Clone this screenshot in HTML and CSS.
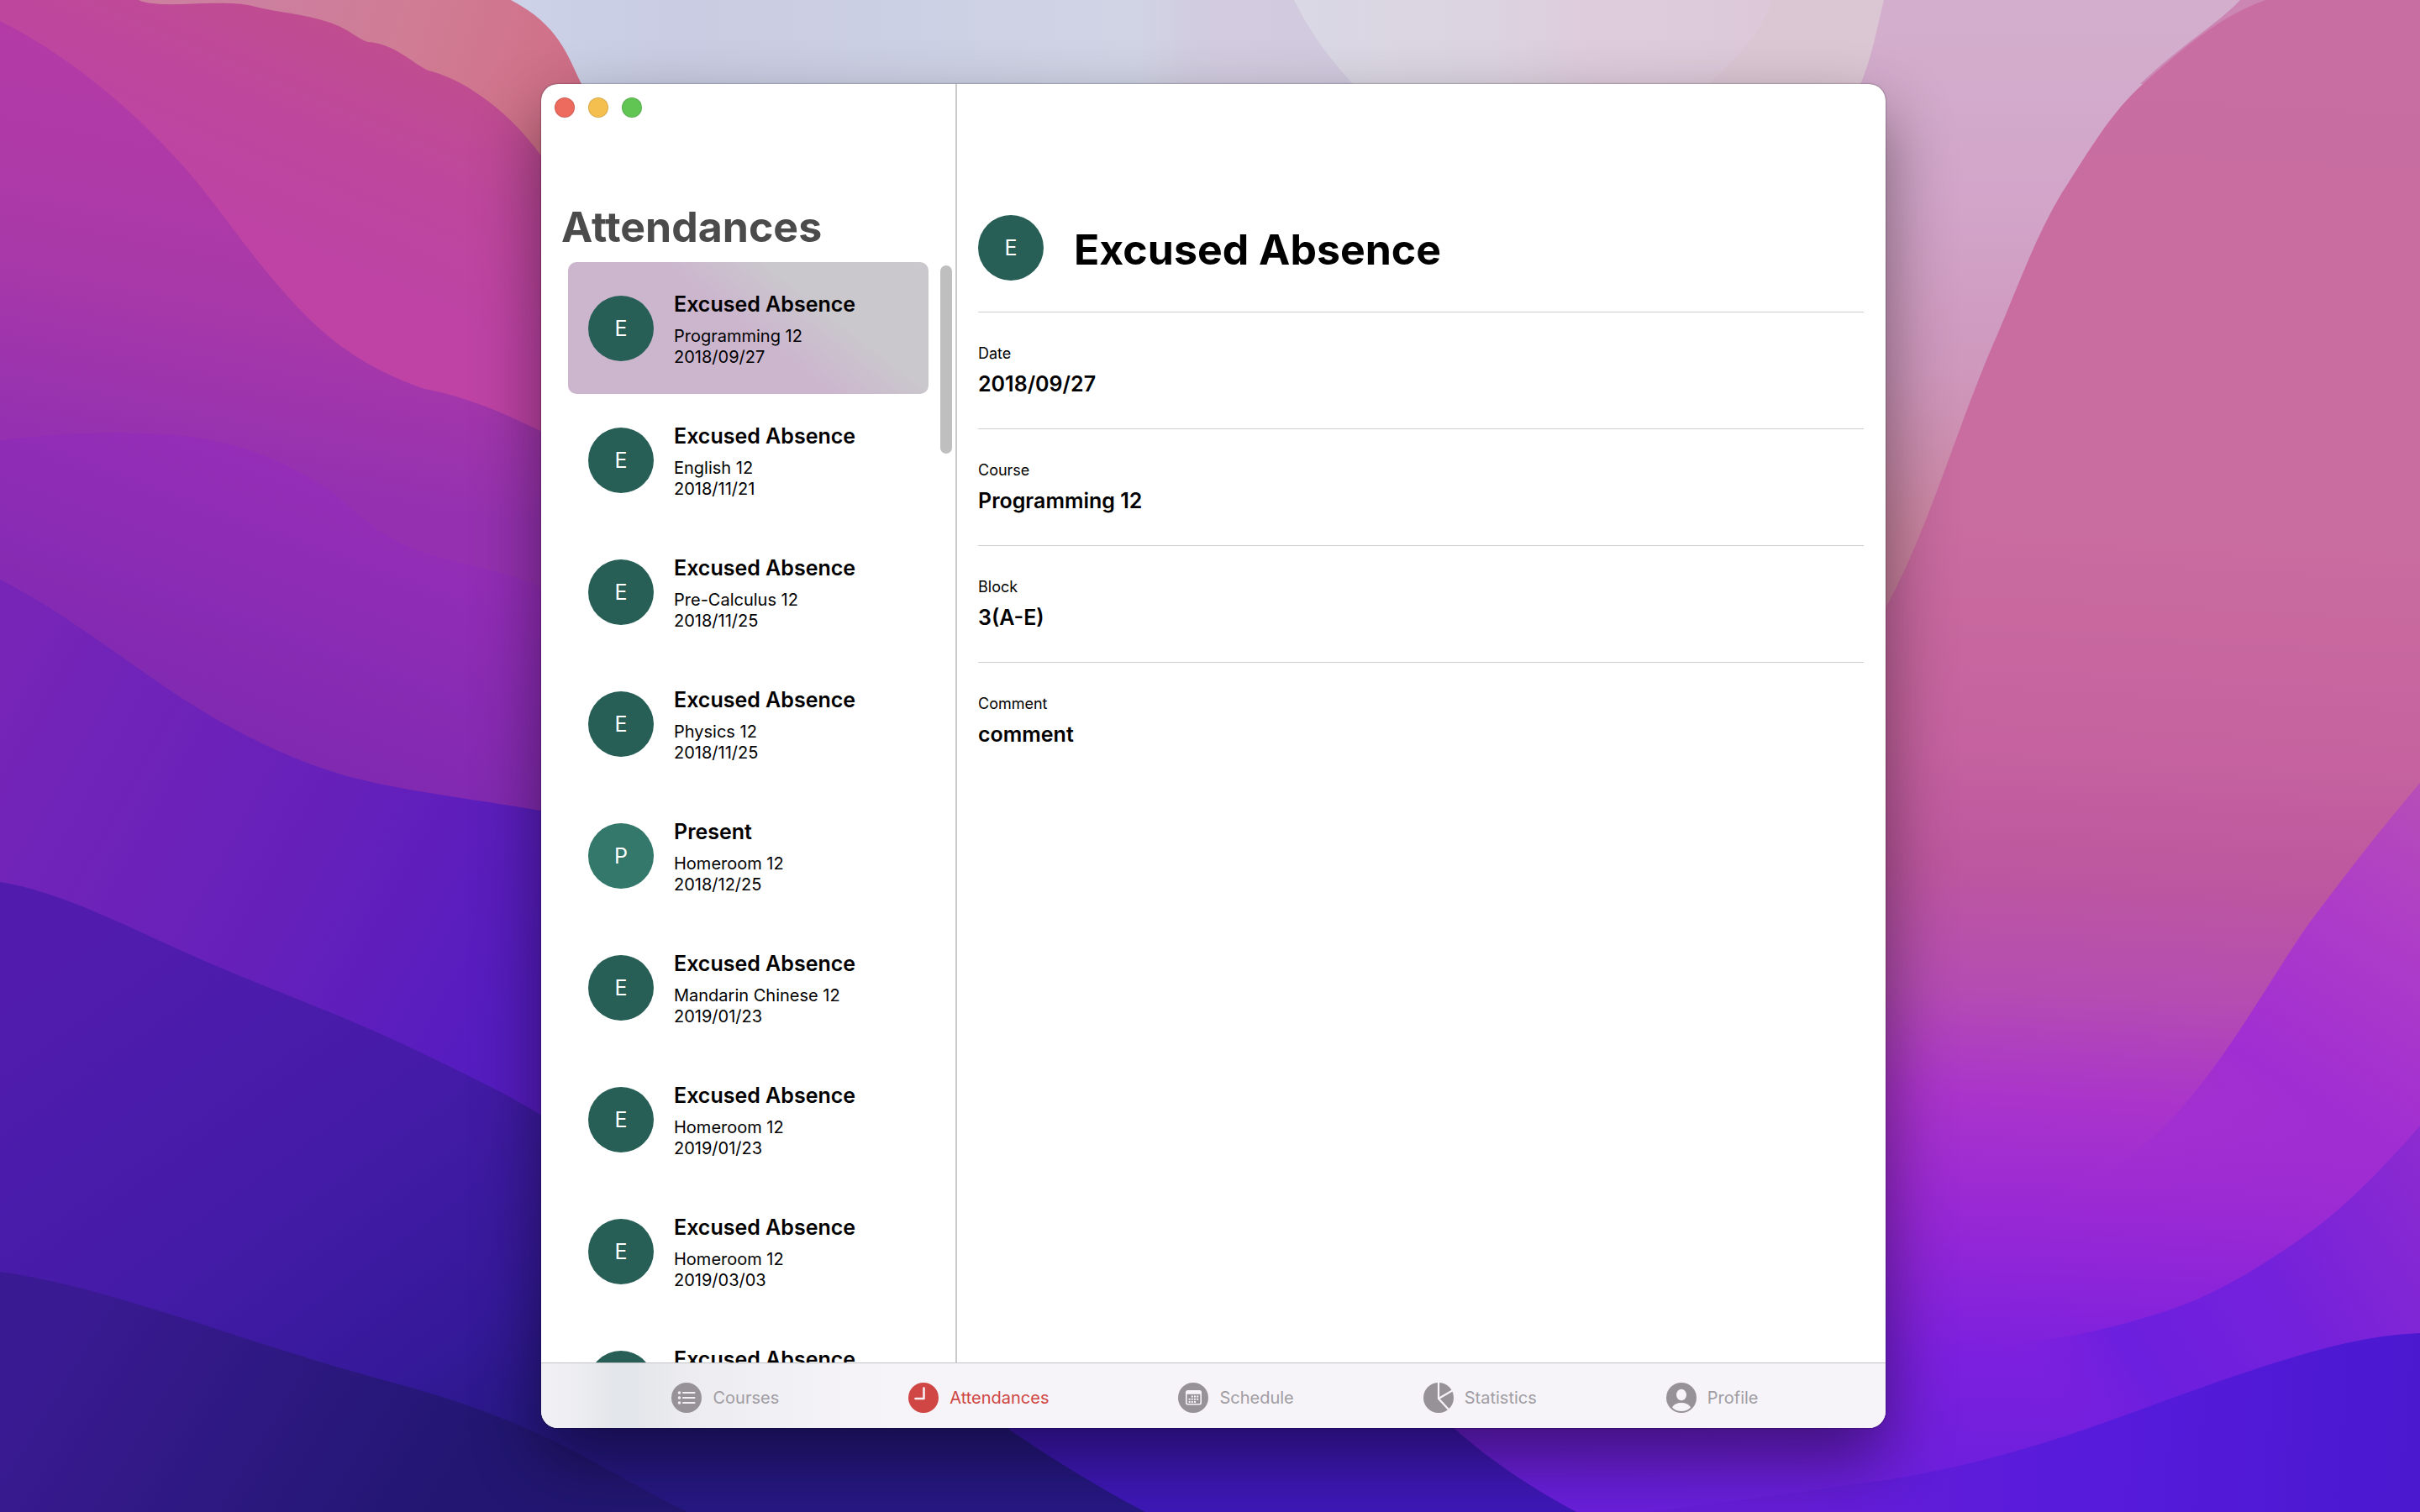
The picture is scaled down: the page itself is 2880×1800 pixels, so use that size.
FILE: index.html
```html
<!DOCTYPE html>
<html lang="en">
<head>
<meta charset="utf-8">
<title>Attendances</title>
<meta name="viewport" content="width=device-width, initial-scale=1">
<link rel="stylesheet" href="styles.css">
</head>
<body>
<svg class="wallpaper" viewBox="0 0 2880 1800" preserveAspectRatio="none" aria-hidden="true">
  <defs>
    <linearGradient id="sky" gradientUnits="userSpaceOnUse" x1="600" y1="0" x2="2240" y2="0">
      <stop offset="0" stop-color="#cdd2e8"/><stop offset=".12" stop-color="#c9cce2"/><stop offset=".46" stop-color="#d0d4e5"/><stop offset=".5" stop-color="#d2cce0"/><stop offset="1" stop-color="#d0c4da"/>
    </linearGradient>
    <linearGradient id="mist" gradientUnits="userSpaceOnUse" x1="1550" y1="0" x2="2110" y2="0">
      <stop offset="0" stop-color="#dad8e5"/><stop offset=".4" stop-color="#dcd4e0"/><stop offset=".6" stop-color="#deccdc"/><stop offset="1" stop-color="#dcc8d8"/>
    </linearGradient>
    <linearGradient id="lilac" x1="0" y1="0" x2="0" y2="1">
      <stop offset="0" stop-color="#d3afcd"/><stop offset=".3" stop-color="#d2a5c9"/><stop offset=".55" stop-color="#cf98bd"/><stop offset=".8" stop-color="#cb84a0"/><stop offset="1" stop-color="#c67a98"/>
    </linearGradient>
    <linearGradient id="rose" gradientUnits="userSpaceOnUse" x1="2600" y1="0" x2="2500" y2="1800">
      <stop offset="0" stop-color="#c96ea2"/><stop offset=".35" stop-color="#c96c9f"/><stop offset=".5" stop-color="#c5629f"/><stop offset=".58" stop-color="#bd579f"/><stop offset=".66" stop-color="#b44cb2"/><stop offset=".73" stop-color="#aa34cb"/><stop offset=".8" stop-color="#9a29d4"/><stop offset=".9" stop-color="#7c20de"/><stop offset="1" stop-color="#6a1fdc"/>
    </linearGradient>
    <linearGradient id="orchid" gradientUnits="userSpaceOnUse" x1="2880" y1="920" x2="2560" y2="1440">
      <stop offset="0" stop-color="#b74fb6"/><stop offset=".3" stop-color="#ae3cc8"/><stop offset=".65" stop-color="#a02dd2"/><stop offset="1" stop-color="#9629d6" stop-opacity="0"/>
    </linearGradient>
    <linearGradient id="violet" gradientUnits="userSpaceOnUse" x1="2880" y1="1340" x2="2420" y2="1640">
      <stop offset="0" stop-color="#8d2bcf"/><stop offset=".45" stop-color="#7421db"/><stop offset=".8" stop-color="#6c1fde"/><stop offset="1" stop-color="#741fde" stop-opacity="0"/>
    </linearGradient>
    <linearGradient id="indigo" gradientUnits="userSpaceOnUse" x1="2150" y1="1740" x2="2860" y2="1800">
      <stop offset="0" stop-color="#661dd8"/><stop offset=".5" stop-color="#561bdb"/><stop offset="1" stop-color="#4b18d0"/>
    </linearGradient>
    <linearGradient id="peach" gradientUnits="userSpaceOnUse" x1="300" y1="0" x2="690" y2="120">
      <stop offset="0" stop-color="#cc7f9f"/><stop offset=".5" stop-color="#d07c94"/><stop offset="1" stop-color="#cf6e86"/>
    </linearGradient>
    <linearGradient id="magenta" gradientUnits="userSpaceOnUse" x1="560" y1="60" x2="440" y2="340">
      <stop offset="0" stop-color="#c04f8c"/><stop offset=".5" stop-color="#be479c"/><stop offset="1" stop-color="#be43a5"/>
    </linearGradient>
    <linearGradient id="plum" gradientUnits="userSpaceOnUse" x1="300" y1="50" x2="200" y2="540">
      <stop offset="0" stop-color="#b53ba6"/><stop offset=".6" stop-color="#a939a8"/><stop offset="1" stop-color="#9531b0"/>
    </linearGradient>
    <linearGradient id="grape" gradientUnits="userSpaceOnUse" x1="380" y1="520" x2="240" y2="900">
      <stop offset="0" stop-color="#982eb8"/><stop offset="1" stop-color="#7e29b0"/>
    </linearGradient>
    <linearGradient id="iris" gradientUnits="userSpaceOnUse" x1="0" y1="800" x2="640" y2="1150">
      <stop offset="0" stop-color="#7625b7"/><stop offset=".6" stop-color="#6520ba"/><stop offset="1" stop-color="#551cc0"/>
    </linearGradient>
    <linearGradient id="royal" gradientUnits="userSpaceOnUse" x1="160" y1="1080" x2="620" y2="1720">
      <stop offset="0" stop-color="#511cae"/><stop offset=".5" stop-color="#431ba6"/><stop offset=".8" stop-color="#35199a"/><stop offset="1" stop-color="#261883"/>
    </linearGradient>
    <linearGradient id="navy" gradientUnits="userSpaceOnUse" x1="100" y1="1540" x2="520" y2="1800">
      <stop offset="0" stop-color="#3a1a92"/><stop offset=".6" stop-color="#2b187e"/><stop offset="1" stop-color="#221672"/>
    </linearGradient>
  </defs>
  <rect width="2880" height="1800" fill="url(#sky)"/>
  <path fill="url(#mist)" d="M1540 0C1560 40 1585 75 1620 110L1700 200H2300V0Z"/>
  <path fill="#dbc5d2" opacity=".8" d="M2110 0C2095 40 2065 75 2020 110V200H2300V0Z"/>
  <path fill="url(#lilac)" d="M2242 0C2232 40 2228 70 2210 110L2180 800H2700V0Z"/>
  <path fill="#cb86b4" d="M2666 0C2640 28 2600 50 2547 100L2600 100 2700 0Z"/>
  <path fill="url(#rose)" d="M2696 0C2640 20 2595 60 2547 103C2512 135 2487 178 2460 220C2427 270 2404 335 2378 396C2345 470 2316 560 2287 631C2265 685 2240 740 2200 790L1400 1500V1800H2880V0Z"/>
  <path fill="url(#orchid)" d="M2880 932C2835 985 2800 1030 2751 1095C2715 1145 2670 1225 2629 1278C2590 1330 2560 1362 2500 1400L2500 1800H2880Z"/>
  <path fill="url(#violet)" d="M2880 1340C2835 1392 2790 1438 2742 1472C2680 1515 2630 1545 2568 1564C2510 1582 2465 1592 2400 1600V1800H2880Z"/>
  <path fill="url(#indigo)" d="M2880 1587C2810 1590 2755 1608 2699 1625C2620 1650 2540 1682 2460 1709C2370 1738 2290 1757 2200 1768C2130 1778 2060 1788 1960 1800H2880Z"/>
  <path fill="#3f18b8" d="M1700 1670L1730 1700C1775 1740 1825 1773 1876 1800H1000V1500Z"/>
  <path fill="#261883" d="M1100 1640L1198 1700C1250 1735 1305 1770 1363 1800H600V1500Z"/>
  <path fill="url(#peach)" d="M0 0H608C665 30 675 65 691 98L760 240H0Z"/>
  <path fill="url(#magenta)" d="M0 0H165C190 12 260 -2 300 7C330 15 360 16 390 26C415 34 425 46 438 50C470 52 490 75 510 84C545 92 600 125 643 184L760 300V560H0Z"/>
  <path fill="url(#plum)" d="M0 25C70 60 150 120 220 200C255 240 285 285 321 328C365 380 410 430 505 463C555 472 600 492 643 513L760 560V760H0Z"/>
  <path fill="url(#grape)" d="M0 524C90 513 190 512 252 524C300 533 350 555 390 582C420 604 440 630 482 649C535 672 590 675 643 698L760 740V1000H0Z"/>
  <path fill="url(#iris)" d="M0 690C70 725 140 780 207 825C260 860 330 900 413 924C480 942 570 952 643 965L760 1000V1400H0Z"/>
  <path fill="url(#royal)" d="M0 1050C75 1062 155 1105 230 1138C320 1178 400 1205 482 1244C540 1272 600 1300 643 1327L760 1400V1800H0Z"/>
  <path fill="url(#navy)" d="M0 1514C75 1524 155 1550 230 1573C310 1600 400 1628 482 1650C570 1675 640 1702 720 1748C755 1766 785 1785 819 1800H0Z"/>
</svg>

<div class="desktop">
  <main class="window">
    <div class="panes">
      <section class="sidebar" aria-label="Attendance list">
        <div class="controls">
          <button class="control control-close" type="button" aria-label="Close"></button>
          <button class="control control-minimize" type="button" aria-label="Minimize"></button>
          <button class="control control-zoom" type="button" aria-label="Zoom"></button>
        </div>
        <h1 class="sidebar-title">Attendances</h1>
        <div class="list-area">
          <div class="list">
            <button class="row row-selected" type="button"><span class="avatar">E</span><span class="row-text"><span class="row-title">Excused Absence</span><span class="row-meta">Programming 12</span><span class="row-meta">2018/09/27</span></span></button>
            <button class="row" type="button"><span class="avatar">E</span><span class="row-text"><span class="row-title">Excused Absence</span><span class="row-meta">English 12</span><span class="row-meta">2018/11/21</span></span></button>
            <button class="row" type="button"><span class="avatar">E</span><span class="row-text"><span class="row-title">Excused Absence</span><span class="row-meta">Pre-Calculus 12</span><span class="row-meta">2018/11/25</span></span></button>
            <button class="row" type="button"><span class="avatar">E</span><span class="row-text"><span class="row-title">Excused Absence</span><span class="row-meta">Physics 12</span><span class="row-meta">2018/11/25</span></span></button>
            <button class="row" type="button"><span class="avatar avatar-present">P</span><span class="row-text"><span class="row-title">Present</span><span class="row-meta">Homeroom 12</span><span class="row-meta">2018/12/25</span></span></button>
            <button class="row" type="button"><span class="avatar">E</span><span class="row-text"><span class="row-title">Excused Absence</span><span class="row-meta">Mandarin Chinese 12</span><span class="row-meta">2019/01/23</span></span></button>
            <button class="row" type="button"><span class="avatar">E</span><span class="row-text"><span class="row-title">Excused Absence</span><span class="row-meta">Homeroom 12</span><span class="row-meta">2019/01/23</span></span></button>
            <button class="row" type="button"><span class="avatar">E</span><span class="row-text"><span class="row-title">Excused Absence</span><span class="row-meta">Homeroom 12</span><span class="row-meta">2019/03/03</span></span></button>
            <button class="row" type="button"><span class="avatar">E</span><span class="row-text"><span class="row-title">Excused Absence</span></span></button>
          </div>
          <span class="scroll-thumb"></span>
        </div>
      </section>

      <section class="detail" aria-label="Attendance detail">
        <header class="detail-header">
          <span class="avatar">E</span>
          <h2 class="detail-title">Excused Absence</h2>
        </header>
        <dl class="fields">
          <div class="field"><dt>Date</dt><dd>2018/09/27</dd></div>
          <div class="field"><dt>Course</dt><dd>Programming 12</dd></div>
          <div class="field"><dt>Block</dt><dd>3(A-E)</dd></div>
          <div class="field"><dt>Comment</dt><dd>comment</dd></div>
        </dl>
      </section>
    </div>

    <nav class="tabs" aria-label="Sections">
      <a class="tab" href="#courses">
        <svg class="tab-icon" viewBox="0 0 36 36" aria-hidden="true"><circle cx="18" cy="18" r="18" fill="currentColor"/><g fill="#f1f0f5"><circle cx="9.5" cy="12" r="1.8"/><circle cx="9.5" cy="18" r="1.8"/><circle cx="9.5" cy="24" r="1.8"/></g><path d="M14 12H27.500M14 18H27.500M14 24H27.500" stroke="#f1f0f5" stroke-width="2" stroke-linecap="round"/></svg>
        <span>Courses</span>
      </a>
      <a class="tab tab-active" href="#attendances" aria-current="page">
        <svg class="tab-icon" viewBox="0 0 36 36" aria-hidden="true"><circle cx="18" cy="18" r="18" fill="currentColor"/><path d="M18.500 6.500V19H8.500" fill="none" stroke="#f6eef2" stroke-width="2.600" stroke-linecap="round" stroke-linejoin="round"/></svg>
        <span>Attendances</span>
      </a>
      <a class="tab" href="#schedule">
        <svg class="tab-icon" viewBox="0 0 36 36" aria-hidden="true"><circle cx="18" cy="18" r="18" fill="currentColor"/><path fill="#f6f4f9" fill-rule="evenodd" d="M11.500 9H25.500Q28 9 28 11.500V24Q28 26.500 25.500 26.500H11.500Q9 26.500 9 24V11.500Q9 9 11.500 9ZM10.600 13.800V23.800Q10.600 25 11.800 25H25.200Q26.400 25 26.400 23.800V13.800Z"/><path fill="none" stroke="#f6f4f9" stroke-width="2" stroke-dasharray="2 1.200" d="M15.800 16.500H25M12.600 19.700H25M12.600 22.900H22"/></svg>
        <span>Schedule</span>
      </a>
      <a class="tab" href="#statistics">
        <svg class="tab-icon" viewBox="0 0 36 36" aria-hidden="true"><circle cx="18" cy="18" r="18" fill="currentColor"/><path d="M18 -1V19L30 32M18 19L36 8.500" fill="none" stroke="#f6f4f9" stroke-width="2.200"/></svg>
        <span>Statistics</span>
      </a>
      <a class="tab" href="#profile">
        <svg class="tab-icon" viewBox="0 0 36 36" aria-hidden="true"><circle cx="18" cy="18" r="18" fill="currentColor"/><ellipse cx="18" cy="14.500" rx="6" ry="6.800" fill="#f6f4f9"/><path d="M7 29.500Q10 24 18 24T29 29.500Q24.500 34 18 34T7 29.500Z" fill="#f6f4f9"/></svg>
        <span>Profile</span>
      </a>
    </nav>
  </main>
</div>
</body>
</html>
```
FILE: styles.css
```css
* {
  box-sizing: border-box;
}

body {
  margin: 0;
  font-family: Inter, "Liberation Sans", sans-serif;
  color: #000;
}

button {
  margin: 0;
  padding: 0;
  border: 0;
  background: none;
  font: inherit;
  color: inherit;
  text-align: left;
}

.wallpaper {
  position: absolute;
  inset: 0;
  width: 100%;
  height: 100%;
}

.desktop {
  position: relative;
  display: grid;
  grid-template-columns: 161fr 400fr 159fr;
  grid-template-rows: 1fr 16fr 1fr;
  height: 100vh;
  overflow: hidden;
}

.window {
  grid-area: 2 / 2;
  display: flex;
  flex-direction: column;
  min-height: 0;
  overflow: hidden;
  border-radius: 20px;
  background: #fff;
  box-shadow: 0 0 2px rgba(0, 0, 0, 0.6), 0 36px 80px rgba(0, 0, 0, 0.45);
}

.panes {
  display: grid;
  grid-template-columns: 495px 1fr;
  flex: 1;
  min-height: 0;
}

.sidebar {
  display: flex;
  flex-direction: column;
  min-height: 0;
  border-right: 2px solid #cbcbcb;
}

.controls {
  display: flex;
  gap: 16px;
  padding: 16px;
}

.control {
  width: 24px;
  height: 24px;
  border: 1px solid rgba(0, 0, 0, 0.12);
  border-radius: 50%;
}

.control-close { background: #ec6a5e; }
.control-minimize { background: #f4bf4f; }
.control-zoom { background: #61c554; }

.sidebar-title,
.detail-title {
  margin: 0;
  font-size: 50px;
  line-height: 64px;
  font-weight: 700;
}

.sidebar-title {
  padding: 82px 24px 10px;
  color: #4b4b4b;
}

.list-area {
  position: relative;
  flex: 1;
  min-height: 0;
  overflow: hidden;
}

.list {
  display: flex;
  flex-direction: column;
  padding: 0 32px;
}

.row {
  display: flex;
  flex: none;
  align-items: center;
  gap: 24px;
  height: 157px;
  padding: 0 24px;
  border-radius: 10px;
}

.row-selected {
  background: linear-gradient(38deg, #ccb6ce 50%, #cac8cd 70%);
}

.avatar {
  display: grid;
  place-items: center;
  flex: none;
  width: 78px;
  height: 78px;
  border-radius: 50%;
  background: #275f56;
  color: #fff;
  font-size: 25px;
  line-height: 32px;
}

.avatar-present {
  background: #33786b;
}

.row-text {
  display: flex;
  flex-direction: column;
  height: 90px;
}

.row-title {
  margin-bottom: 10px;
  font-size: 25px;
  line-height: 32px;
  font-weight: 600;
}

.row-meta {
  font-size: 20px;
  line-height: 25px;
}

.scroll-thumb {
  position: absolute;
  top: 4px;
  right: 4px;
  width: 14px;
  height: 224px;
  border-radius: 7px;
  background: #bfbfbf;
}

.detail {
  padding: 156px 26px 0 25px;
}

.detail-header {
  display: flex;
  align-items: center;
  gap: 36px;
  padding-bottom: 37px;
}

.detail-title {
  padding-top: 4px;
}

.fields {
  margin: 0;
}

.field {
  height: 139px;
  padding-top: 37px;
  border-top: 1px solid #cfcfcf;
}

.field dt {
  font-size: 18px;
  line-height: 24px;
}

.field dd {
  margin: 8px 0 0;
  font-size: 25px;
  line-height: 32px;
  font-weight: 600;
}

.tabs {
  display: flex;
  justify-content: center;
  gap: 154px;
  height: 78px;
  padding: 5px 0 0 4px;
  border-top: 1px solid #c4c3c7;
  background: linear-gradient(90deg, #f1f0f5 0, #eeeef2 40px, #e3e6ea 85px, #e3e6ea 115px, #ebebf0 165px, #f1f0f5 280px, #f6f4f9 420px);
}

.tab {
  display: flex;
  align-items: center;
  gap: 13px;
  color: #969298;
  font-size: 20px;
  line-height: 24px;
  text-decoration: none;
}

.tab span {
  color: #a09da3;
}

.tab-active,
.tab-active span {
  color: #cf4644;
}

.tab-icon {
  width: 36px;
  height: 36px;
}
```
